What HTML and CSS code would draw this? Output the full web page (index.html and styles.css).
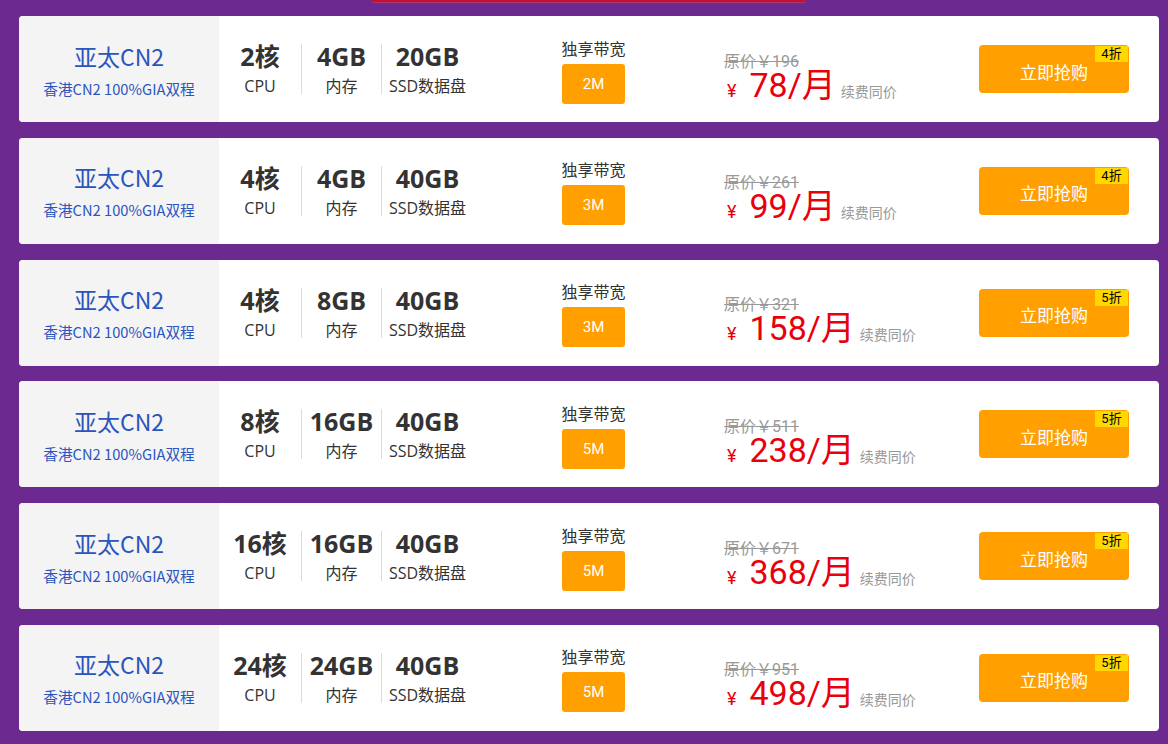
FILE: index.html
```html
<!DOCTYPE html>
<html lang="zh-CN">
<head>
<meta charset="utf-8">
<title>亚太CN2</title>
<link rel="stylesheet" href="styles.css">
</head>
<body>
<div class="page">
  <div class="topbar"></div>
  <div class="plans">

    <div class="plan">
      <div class="plan-name"><div class="title">亚太CN2</div><div class="sub">香港CN2 100%GIA双程</div></div>
      <div class="specs">
        <div class="spec s1"><b>2核</b><span>CPU</span></div>
        <div class="spec s2"><b>4GB</b><span>内存</span></div>
        <div class="spec s3"><b>20GB</b><span>SSD数据盘</span></div>
      </div>
      <div class="bw"><div class="bw-label">独享带宽</div><div class="bw-val">2M</div></div>
      <div class="price"><div class="orig">原价￥196</div><div class="now"><span class="yen">¥</span><span class="amount">78/月</span><span class="renew">续费同价</span></div></div>
      <a class="buy" href="#">立即抢购<span class="badge">4折</span></a>
    </div>

    <div class="plan">
      <div class="plan-name"><div class="title">亚太CN2</div><div class="sub">香港CN2 100%GIA双程</div></div>
      <div class="specs">
        <div class="spec s1"><b>4核</b><span>CPU</span></div>
        <div class="spec s2"><b>4GB</b><span>内存</span></div>
        <div class="spec s3"><b>40GB</b><span>SSD数据盘</span></div>
      </div>
      <div class="bw"><div class="bw-label">独享带宽</div><div class="bw-val">3M</div></div>
      <div class="price"><div class="orig">原价￥261</div><div class="now"><span class="yen">¥</span><span class="amount">99/月</span><span class="renew">续费同价</span></div></div>
      <a class="buy" href="#">立即抢购<span class="badge">4折</span></a>
    </div>

    <div class="plan">
      <div class="plan-name"><div class="title">亚太CN2</div><div class="sub">香港CN2 100%GIA双程</div></div>
      <div class="specs">
        <div class="spec s1"><b>4核</b><span>CPU</span></div>
        <div class="spec s2"><b>8GB</b><span>内存</span></div>
        <div class="spec s3"><b>40GB</b><span>SSD数据盘</span></div>
      </div>
      <div class="bw"><div class="bw-label">独享带宽</div><div class="bw-val">3M</div></div>
      <div class="price"><div class="orig">原价￥321</div><div class="now"><span class="yen">¥</span><span class="amount">158/月</span><span class="renew">续费同价</span></div></div>
      <a class="buy" href="#">立即抢购<span class="badge">5折</span></a>
    </div>

    <div class="plan">
      <div class="plan-name"><div class="title">亚太CN2</div><div class="sub">香港CN2 100%GIA双程</div></div>
      <div class="specs">
        <div class="spec s1"><b>8核</b><span>CPU</span></div>
        <div class="spec s2"><b>16GB</b><span>内存</span></div>
        <div class="spec s3"><b>40GB</b><span>SSD数据盘</span></div>
      </div>
      <div class="bw"><div class="bw-label">独享带宽</div><div class="bw-val">5M</div></div>
      <div class="price"><div class="orig">原价￥511</div><div class="now"><span class="yen">¥</span><span class="amount">238/月</span><span class="renew">续费同价</span></div></div>
      <a class="buy" href="#">立即抢购<span class="badge">5折</span></a>
    </div>

    <div class="plan">
      <div class="plan-name"><div class="title">亚太CN2</div><div class="sub">香港CN2 100%GIA双程</div></div>
      <div class="specs">
        <div class="spec s1"><b>16核</b><span>CPU</span></div>
        <div class="spec s2"><b>16GB</b><span>内存</span></div>
        <div class="spec s3"><b>40GB</b><span>SSD数据盘</span></div>
      </div>
      <div class="bw"><div class="bw-label">独享带宽</div><div class="bw-val">5M</div></div>
      <div class="price"><div class="orig">原价￥671</div><div class="now"><span class="yen">¥</span><span class="amount">368/月</span><span class="renew">续费同价</span></div></div>
      <a class="buy" href="#">立即抢购<span class="badge">5折</span></a>
    </div>

    <div class="plan">
      <div class="plan-name"><div class="title">亚太CN2</div><div class="sub">香港CN2 100%GIA双程</div></div>
      <div class="specs">
        <div class="spec s1"><b>24核</b><span>CPU</span></div>
        <div class="spec s2"><b>24GB</b><span>内存</span></div>
        <div class="spec s3"><b>40GB</b><span>SSD数据盘</span></div>
      </div>
      <div class="bw"><div class="bw-label">独享带宽</div><div class="bw-val">5M</div></div>
      <div class="price"><div class="orig">原价￥951</div><div class="now"><span class="yen">¥</span><span class="amount">498/月</span><span class="renew">续费同价</span></div></div>
      <a class="buy" href="#">立即抢购<span class="badge">5折</span></a>
    </div>

  </div>
</div>
</body>
</html>
```

FILE: styles.css
```css
* { box-sizing: border-box; }
html, body {
  margin: 0;
  padding: 0;
  background: #6c2a90;
  font-family: "Open Sans", "Noto Sans CJK SC", sans-serif;
  color: #333;
}
.page {
  width: 1168px;
  height: 744px;
  overflow: hidden;
  padding-left: 19px;
}
.topbar {
  width: 434px;
  height: 2px;
  margin: 0 0 14px 353px;
  background: #c3122f;
  border-radius: 0 0 6px 6px;
  box-shadow: 0 1px 1px rgba(230, 60, 80, 0.6);
}
.plans {
  width: 1140px;
  display: flex;
  flex-direction: column;
  gap: 15.8px;
}
.plan {
  height: 106px;
  background: #fff;
  border-radius: 4px;
  overflow: hidden;
  display: flex;
  align-items: center;
}
.plan-name {
  width: 200px;
  height: 100%;
  background: #f4f4f4;
  display: flex;
  flex-direction: column;
  align-items: center;
  justify-content: center;
  padding-top: 1px;
  color: #2b55bd;
  font-family: "Noto Sans CJK SC", sans-serif;
}
.plan-name .title {
  font-size: 23px;
  line-height: 30px;
}
.plan-name .sub {
  font-size: 14.7px;
  line-height: 20px;
  margin-top: 8px;
  white-space: nowrap;
}
.specs {
  display: flex;
  align-items: center;
}
.spec {
  height: 50px;
  display: flex;
  flex-direction: column;
  align-items: center;
  justify-content: center;
  text-align: center;
  white-space: nowrap;
  padding-top: 2px;
}
.spec b {
  font-size: 25px;
  line-height: 30px;
  font-weight: 700;
  color: #333;
  font-family: "Open Sans", "Noto Sans CJK SC", sans-serif;
}
.spec span {
  font-size: 16px;
  line-height: 26px;
  margin-top: 2px;
  font-family: "Open Sans", "Noto Sans CJK SC", sans-serif;
}
.s1 { width: 82px; }
.s2 { width: 80px; border-left: 1px solid #dcdcdc; }
.s3 { width: 92px; border-left: 1px solid #dcdcdc; }
.bw {
  width: 65px;
  margin-left: 88px;
  display: flex;
  flex-direction: column;
  align-items: center;
  padding-top: 1px;
}
.bw-label {
  font-size: 16px;
  line-height: 24px;
  white-space: nowrap;
  color: #333;
  font-family: "Noto Sans CJK SC", sans-serif;
}
.bw-val {
  width: 63px;
  height: 40px;
  margin-top: 4px;
  background: #ffa000;
  border-radius: 3px;
  color: #fff;
  font-family: Roboto, sans-serif;
  font-size: 15px;
  display: flex;
  align-items: center;
  justify-content: center;
}
.price {
  flex: 1;
  margin-left: 98px;
  padding-top: 21px;
  white-space: nowrap;
}
.orig {
  font-size: 16px;
  line-height: 17px;
  color: #999;
  text-decoration: line-through;
  font-family: Roboto, "Noto Sans CJK SC", sans-serif;
}
.now {
  line-height: 30px;
  color: #e8000b;
  font-family: Roboto, "Noto Sans CJK SC", sans-serif;
  margin-top: 0;
}
.yen {
  font-size: 18px;
  margin-left: 3px;
  margin-right: 13px;
}
.amount {
  font-size: 34px;
}
.renew {
  font-size: 14px;
  color: #999;
  margin-left: 5px;
  font-family: "Noto Sans CJK SC", sans-serif;
}
.buy {
  position: relative;
  width: 150px;
  height: 48px;
  margin-right: 30px;
  background: #ffa000;
  border-radius: 4px;
  color: #fff;
  text-decoration: none;
  font-size: 17px;
  font-family: "Noto Sans CJK SC", sans-serif;
  display: flex;
  align-items: center;
  justify-content: center;
  padding-top: 4px;
}
.badge {
  position: absolute;
  top: 1px;
  right: 1px;
  width: 33px;
  height: 16px;
  background: #ffd800;
  color: #000;
  font-size: 13px;
  line-height: 16px;
  text-align: center;
  font-family: Roboto, "Noto Sans CJK SC", sans-serif;
}
```
